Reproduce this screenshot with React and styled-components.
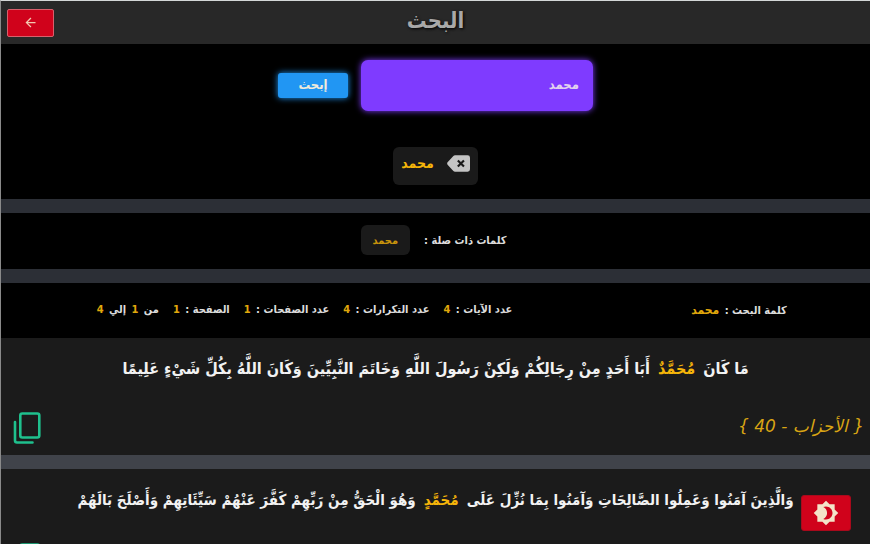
import React, { useState } from "react";
import styled, { createGlobalStyle } from "styled-components";
import { MdArrowBack, MdBrightness4 } from "react-icons/md";

const GlobalStyle = createGlobalStyle`
  * { box-sizing: border-box; }
  body { margin: 0; background: #1b1b1b; color: #dcdcdc; font-family: "DejaVu Sans Condensed", "DejaVu Sans", sans-serif; overflow: hidden; }
  button, input { font-family: inherit; }
`;

const Page = styled.div`
  border-top: 1px solid #d4d7d7;
  border-left: 1px solid #8a8a8a;
  height: 100vh;
  overflow: hidden;
`;

const Header = styled.header`
  display: grid;
  grid-template-columns: 1fr auto 1fr;
  align-items: center;
  direction: ltr;
  height: 43px;
  padding: 0 6px;
  background: #282828;
`;

const BackButton = styled.button`
  display: flex;
  align-items: center;
  justify-content: center;
  width: 47px;
  height: 28px;
  padding: 0;
  border: 1px solid #d8606c;
  border-radius: 2px;
  background: #d0021b;
  color: #f3c9b0;
  font-size: 15px;
`;

const Title = styled.h1`
  margin: 0;
  padding-bottom: 4px;
  color: #a8a8a8;
  font-size: 22px;
  line-height: 32px;
  font-weight: 700;
  text-shadow: 1px 1px 3px #000;
`;

const SearchPanel = styled.section`
  display: flex;
  flex-direction: column;
  align-items: center;
  gap: 36px;
  padding: 16px 0 14px;
  background: #000;
`;

const SearchForm = styled.form`
  display: flex;
  align-items: center;
  gap: 13px;
`;

const SearchInput = styled.input`
  width: 232px;
  height: 51px;
  padding: 0 14px 2px;
  border: 0;
  border-radius: 7px;
  background: #7f3bff;
  box-shadow: 0 0 6px #7f3bff;
  color: #e2d3ee;
  font-size: 13px;
  font-weight: 700;
`;

const SubmitButton = styled.button`
  width: 70px;
  height: 25px;
  padding: 0 0 2px;
  border: 0;
  border-radius: 3px;
  background: #2196f3;
  box-shadow: 0 0 6px #2196f3;
  color: #efeadb;
  font-size: 13px;
  font-weight: 700;
`;

const HistoryChip = styled.div`
  display: flex;
  align-items: center;
  gap: 13px;
  height: 38px;
  padding: 0 8px 6px;
  border-radius: 6px;
  background: #1a1a1a;
`;

const ClearButton = styled.button`
  display: flex;
  padding: 0;
  border: 0;
  background: none;
  color: #c4c4c4;
`;

const Term = styled.span`
  color: ${(p) => (p.$bright ? "#f5b50a" : "#c8940c")};
  font-size: ${(p) => (p.$bright ? 14 : 11)}px;
  font-weight: 700;
`;

const Divider = styled.hr`
  height: 14px;
  margin: 0;
  border: 0;
  background: ${(p) => (p.$light ? "#40434a" : "#2c2f36")};
`;

const Related = styled.section`
  display: flex;
  align-items: center;
  justify-content: center;
  gap: 14px;
  height: 56px;
  padding-right: 4px;
  padding-bottom: 2px;
  background: #000;
  font-size: 11px;
  font-weight: 700;
`;

const RelatedChip = styled.button`
  height: 30px;
  padding: 0 12px 2px;
  border: 0;
  border-radius: 6px;
  background: #1a1a1a;
`;

const Summary = styled.section`
  display: grid;
  grid-template-columns: 264px 1fr;
  align-items: center;
  height: 55px;
  padding-bottom: 2px;
  background: #000;
  font-size: 11px;
  font-weight: 700;
`;

const Keyword = styled.p`
  margin: 0;
  text-align: center;
`;

const Stats = styled.div`
  display: flex;
  justify-content: center;
  gap: 12px;
`;

const Stat = styled.span`
  white-space: nowrap;
`;

const Figure = styled.span`
  margin: 0 2px;
  color: #e0a80c;
  font-size: ${(p) => (p.$word ? 12 : 11)}px;
`;

const Verse = styled.article`
  background: #1b1b1b;
`;

const VerseText = styled.p`
  display: flex;
  align-items: center;
  justify-content: center;
  gap: 8px;
  height: 62px;
  margin: 0;
  color: #f2f2f2;
  font-size: ${(p) => (p.$long ? 15 : 16)}px;
  font-weight: 700;
  line-height: 32px;
  white-space: nowrap;
`;

const Match = styled.mark`
  background: none;
  color: #f5b50a;
`;

const VerseFooter = styled.footer`
  display: flex;
  align-items: center;
  height: 55px;
  padding: 0 6px 0 12px;
`;

const Reference = styled.span`
  padding-bottom: 4px;
  color: #d9a514;
  font-family: "DejaVu Sans", sans-serif;
  font-size: 17px;
  font-style: italic;
`;

const CopyButton = styled.button`
  display: flex;
  margin-right: auto;
  padding: 0;
  border: 0;
  background: none;
  color: #1fc08d;
`;

const ThemeButton = styled.button`
  position: fixed;
  right: 19px;
  bottom: 13px;
  display: flex;
  align-items: center;
  justify-content: center;
  width: 50px;
  height: 36px;
  padding: 0;
  border: 1px solid #a80a1c;
  border-radius: 3px;
  background: #d0021b;
  color: #f3e3c8;
  font-size: 26px;
`;

const CopyIcon = () => (
  <svg width="28" height="32" viewBox="0 0 28 32" fill="none" stroke="currentColor" strokeWidth="2.6" strokeLinecap="round" aria-hidden="true">
    <rect x="7.300" y="1.500" width="19" height="24" rx="2" />
    <path d="M2 10v18.500a2 2 0 0 0 2 2h15.500" />
  </svg>
);

const BackspaceIcon = () => (
  <svg width="23" height="17" viewBox="0 0 24 17" aria-hidden="true">
    <path fill="currentColor" d="M8.500 0H21.500A2.500 2.500 0 0 1 24 2.500V14.500A2.500 2.500 0 0 1 21.500 17H8.500Q7.200 17 6.400 16.100L.6 9.700Q-.3 8.500.6 7.300L6.400.9Q7.200 0 8.500 0Z" />
    <path stroke="#1a1a1a" strokeWidth="2.2" d="M11.300 5.300l6.400 6.400M17.700 5.300l-6.400 6.400" />
  </svg>
);

const verses = [
  {
    before: "مَا كَانَ",
    match: "مُحَمَّدٌ",
    after: "أَبَا أَحَدٍ مِنْ رِجَالِكُمْ وَلَكِنْ رَسُولَ اللَّهِ وَخَاتَمَ النَّبِيِّينَ وَكَانَ اللَّهُ بِكُلِّ شَيْءٍ عَلِيمًا",
    source: "{ الأحزاب - 40 }",
  },
  {
    before: "وَالَّذِينَ آمَنُوا وَعَمِلُوا الصَّالِحَاتِ وَآمَنُوا بِمَا نُزِّلَ عَلَى",
    match: "مُحَمَّدٍ",
    after: "وَهُوَ الْحَقُّ مِنْ رَبِّهِمْ كَفَّرَ عَنْهُمْ سَيِّئَاتِهِمْ وَأَصْلَحَ بَالَهُمْ",
    long: true,
  },
];

export default function App() {
  const [query, setQuery] = useState("محمد");
  return (
    <Page dir="rtl" lang="ar">
      <GlobalStyle />
      <Header>
        <BackButton type="button" aria-label="رجوع"><MdArrowBack /></BackButton>
        <Title>البحث</Title>
      </Header>
      <SearchPanel>
        <SearchForm onSubmit={(e) => e.preventDefault()}>
          <SearchInput aria-label="كلمة البحث" value={query} onChange={(e) => setQuery(e.target.value)} />
          <SubmitButton type="submit">إبحث</SubmitButton>
        </SearchForm>
        <HistoryChip>
          <ClearButton type="button" aria-label="حذف"><BackspaceIcon /></ClearButton>
          <Term $bright>محمد</Term>
        </HistoryChip>
      </SearchPanel>
      <Divider />
      <Related>
        <span>كلمات ذات صلة :</span>
        <RelatedChip type="button"><Term>محمد</Term></RelatedChip>
      </Related>
      <Divider />
      <Summary>
        <Keyword>كلمة البحث : <Figure $word>محمد</Figure></Keyword>
        <Stats>
          <Stat>عدد الآيات : <Figure>4</Figure></Stat>
          <Stat>عدد التكرارات : <Figure>4</Figure></Stat>
          <Stat>عدد الصفحات : <Figure>1</Figure></Stat>
          <Stat>الصفحة : <Figure>1</Figure></Stat>
          <Stat>من <Figure>1</Figure> إلي <Figure>4</Figure></Stat>
        </Stats>
      </Summary>
      {verses.map((v, i) => (
        <React.Fragment key={v.match}>
          {i > 0 && <Divider $light />}
          <Verse>
            <VerseText $long={v.long}>
              <span>{v.before}</span>
              <Match>{v.match}</Match>
              <span>{v.after}</span>
            </VerseText>
            <VerseFooter>
              {v.source && <Reference>{v.source}</Reference>}
              <CopyButton type="button" aria-label="نسخ"><CopyIcon /></CopyButton>
            </VerseFooter>
          </Verse>
        </React.Fragment>
      ))}
      <ThemeButton type="button" aria-label="تبديل المظهر"><MdBrightness4 /></ThemeButton>
    </Page>
  );
}
